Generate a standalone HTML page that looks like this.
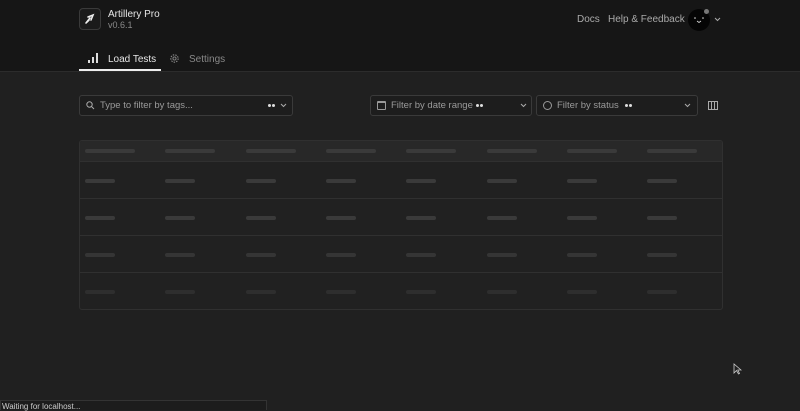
<!DOCTYPE html>
<html><head><meta charset="utf-8"><style>
*{box-sizing:border-box;margin:0;padding:0}
body{width:800px;height:410px;overflow:hidden;background:#202020;font-family:"Liberation Sans",sans-serif;position:relative;color:#ddd}
.hdr{position:absolute;left:0;top:0;width:800px;height:72px;background:#161616;border-bottom:1px solid #2c2c2c}
.abs{position:absolute}
.logo{left:79px;top:8px;width:22px;height:22px;border:1px solid #3a3a3a;border-radius:4px;background:#1b1b1b}
.t{font-size:10px;white-space:nowrap}
.inp{position:absolute;height:21px;border:1px solid #3a3a3a;border-radius:3px;background:#1d1d1d}
.ph{position:absolute;top:4px;font-size:9.5px;color:#9a9a9a;white-space:nowrap}
.dots{position:absolute;top:8px;width:8px;height:3px}
.dots:before,.dots:after{content:"";position:absolute;top:0;width:3px;height:3px;border-radius:50%;background:#ddd}
.dots:before{left:0}.dots:after{left:4px}
.chev{position:absolute;top:7px}
.tbl{position:absolute;left:79px;top:140px;width:644px;height:170px;border:1px solid #303030;border-radius:3px;background:#212121;overflow:hidden}
.row{position:absolute;left:0;width:642px;height:1px;background:#303030}
.bar{position:absolute;height:4px;border-radius:2px;background:#3a3a3a}
</style></head><body>
<div class="hdr"></div>
<div class="abs logo"><svg width="20" height="20" viewBox="0 0 20 20"><path d="M6 14 L10 9 M8 8 L13 6 L11 11 M9 11 L7 13" stroke="#eee" stroke-width="1.6" fill="none" stroke-linecap="round"/></svg></div>
<div class="abs t" style="left:108px;top:9px;color:#e6e6e6">Artillery Pro</div>
<div class="abs t" style="left:108px;top:20px;color:#8a8a8a;font-size:9px">v0.6.1</div>
<div class="abs t" style="left:577px;top:14px;color:#aaa">Docs</div>
<div class="abs t" style="left:608px;top:14px;color:#aaa">Help &amp; Feedback</div>
<div class="abs" style="left:688px;top:9px;width:22px;height:22px;border-radius:50%;background:#050505"></div>
<div class="abs" style="left:704px;top:9px;width:5px;height:5px;border-radius:50%;background:#777"></div>
<svg class="abs" style="left:693px;top:16px" width="12" height="8"><circle cx="2" cy="2" r="0.8" fill="#ddd"/><circle cx="10" cy="2" r="0.8" fill="#ddd"/><path d="M4 5 L6 6.5 L8 5" stroke="#ddd" fill="none" stroke-width="0.8"/></svg>
<svg class="abs" style="left:714px;top:17px" width="7" height="5"><path d="M1 1 L3.5 3.5 L6 1" stroke="#aaa" fill="none"/></svg>
<svg class="abs" style="left:88px;top:53px" width="10" height="11"><rect x="0" y="7" width="2" height="3" fill="#ddd"/><rect x="4" y="4" width="2" height="6" fill="#ddd"/><rect x="8" y="0" width="2" height="10" fill="#ddd"/></svg>
<div class="abs t" style="left:108px;top:54px;color:#e6e6e6">Load Tests</div>
<div class="abs" style="left:79px;top:69px;width:82px;height:2px;background:#eee"></div>
<svg class="abs" style="left:169px;top:53px" width="11" height="11" viewBox="0 0 12 12"><circle cx="6" cy="6" r="4" fill="none" stroke="#888" stroke-width="1.2" stroke-dasharray="1.6 1.2"/><circle cx="6" cy="6" r="1.7" fill="none" stroke="#888"/></svg>
<div class="abs t" style="left:189px;top:54px;color:#888">Settings</div>

<div class="inp" style="left:79px;top:95px;width:214px">
<svg class="abs" style="left:6px;top:5px" width="9" height="9"><circle cx="3.5" cy="3.5" r="2.7" fill="none" stroke="#aaa"/><path d="M5.5 5.5 L8 8" stroke="#aaa"/></svg>
<div class="ph" style="left:20px">Type to filter by tags...</div>
<div class="dots" style="left:188px"></div><svg class="chev" style="left:200px" width="7" height="5"><path d="M1 1 L3.5 3.5 L6 1" stroke="#aaa" fill="none"/></svg></div>
<div class="inp" style="left:370px;top:95px;width:162px">
<div class="abs" style="left:6px;top:5px;width:9px;height:9px;border:1px solid #999;border-top-width:2px;border-radius:1px"></div>
<div class="ph" style="left:20px">Filter by date range</div>
<div class="dots" style="left:105px"></div><svg class="chev" style="left:149px" width="7" height="5"><path d="M1 1 L3.5 3.5 L6 1" stroke="#aaa" fill="none"/></svg></div>
<div class="inp" style="left:536px;top:95px;width:162px">
<div class="abs" style="left:6px;top:5px;width:9px;height:9px;border:1px solid #999;border-radius:50%"></div>
<div class="ph" style="left:20px">Filter by status</div>
<div class="dots" style="left:88px"></div><svg class="chev" style="left:147px" width="7" height="5"><path d="M1 1 L3.5 3.5 L6 1" stroke="#aaa" fill="none"/></svg></div>
<svg class="abs" style="left:708px;top:101px" width="10" height="9"><rect x="0.5" y="0.5" width="9" height="8" fill="none" stroke="#aaa"/><line x1="3.5" y1="0" x2="3.5" y2="9" stroke="#aaa"/><line x1="6.5" y1="0" x2="6.5" y2="9" stroke="#aaa"/></svg>

<div class="tbl">
<div class="abs" style="left:0;top:0;width:642px;height:21px;background:#282828"></div>
<div class="row" style="top:20px"></div><div class="row" style="top:57px"></div><div class="row" style="top:94px"></div><div class="row" style="top:131px"></div>
<div class="bar" style="left:5px;top:8px;width:50px"></div><div class="bar" style="left:85px;top:8px;width:50px"></div><div class="bar" style="left:166px;top:8px;width:50px"></div><div class="bar" style="left:246px;top:8px;width:50px"></div><div class="bar" style="left:326px;top:8px;width:50px"></div><div class="bar" style="left:407px;top:8px;width:50px"></div><div class="bar" style="left:487px;top:8px;width:50px"></div><div class="bar" style="left:567px;top:8px;width:50px"></div>
<div class="bar" style="left:5px;top:38px;width:30px"></div><div class="bar" style="left:85px;top:38px;width:30px"></div><div class="bar" style="left:166px;top:38px;width:30px"></div><div class="bar" style="left:246px;top:38px;width:30px"></div><div class="bar" style="left:326px;top:38px;width:30px"></div><div class="bar" style="left:407px;top:38px;width:30px"></div><div class="bar" style="left:487px;top:38px;width:30px"></div><div class="bar" style="left:567px;top:38px;width:30px"></div>
<div class="bar" style="left:5px;top:75px;width:30px"></div><div class="bar" style="left:85px;top:75px;width:30px"></div><div class="bar" style="left:166px;top:75px;width:30px"></div><div class="bar" style="left:246px;top:75px;width:30px"></div><div class="bar" style="left:326px;top:75px;width:30px"></div><div class="bar" style="left:407px;top:75px;width:30px"></div><div class="bar" style="left:487px;top:75px;width:30px"></div><div class="bar" style="left:567px;top:75px;width:30px"></div>
<div class="bar" style="left:5px;top:112px;width:30px;background:#353535"></div><div class="bar" style="left:85px;top:112px;width:30px;background:#353535"></div><div class="bar" style="left:166px;top:112px;width:30px;background:#353535"></div><div class="bar" style="left:246px;top:112px;width:30px;background:#353535"></div><div class="bar" style="left:326px;top:112px;width:30px;background:#353535"></div><div class="bar" style="left:407px;top:112px;width:30px;background:#353535"></div><div class="bar" style="left:487px;top:112px;width:30px;background:#353535"></div><div class="bar" style="left:567px;top:112px;width:30px;background:#353535"></div>
<div class="bar" style="left:5px;top:149px;width:30px;background:#2e2e2e"></div><div class="bar" style="left:85px;top:149px;width:30px;background:#2e2e2e"></div><div class="bar" style="left:166px;top:149px;width:30px;background:#2e2e2e"></div><div class="bar" style="left:246px;top:149px;width:30px;background:#2e2e2e"></div><div class="bar" style="left:326px;top:149px;width:30px;background:#2e2e2e"></div><div class="bar" style="left:407px;top:149px;width:30px;background:#2e2e2e"></div><div class="bar" style="left:487px;top:149px;width:30px;background:#2e2e2e"></div><div class="bar" style="left:567px;top:149px;width:30px;background:#2e2e2e"></div>
</div>
<svg class="abs" style="left:733px;top:363px" width="9" height="12"><path d="M1 1 L1 10 L3.5 7.5 L5.5 11 L6.5 10.5 L4.8 7 L8 7 Z" fill="#222" stroke="#ccc" stroke-width="0.8"/></svg>
<div class="abs" style="left:0;top:400px;width:267px;height:10px;background:#1c1c1c;border:1px solid #333;border-bottom:none"></div>
<div class="abs" style="left:2px;top:402px;font-size:8px;color:#ccc;white-space:nowrap">Waiting for localhost...</div>
</body></html>
